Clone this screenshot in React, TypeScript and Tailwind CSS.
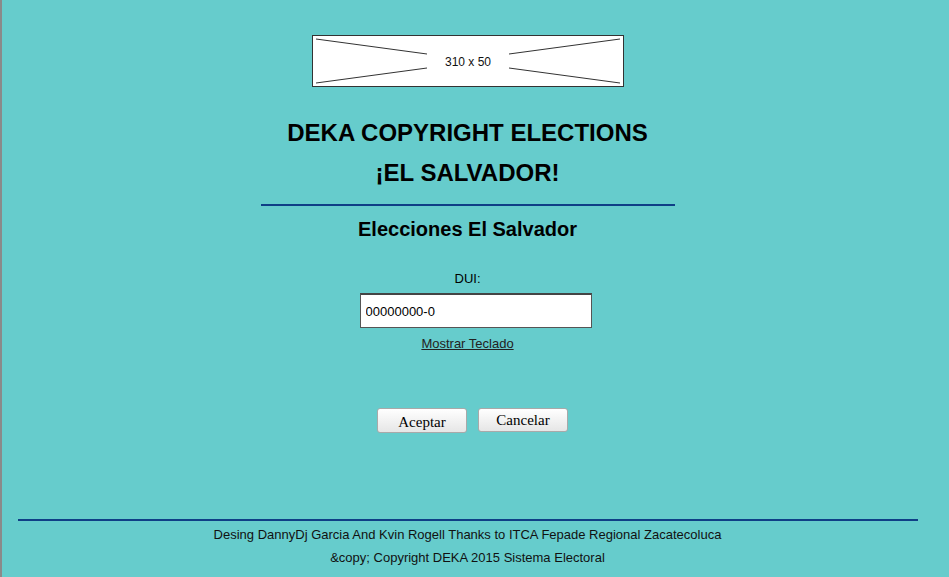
export default function App() {
  return (
    <div className="min-h-[577px] bg-[#66cccc] font-['Liberation_Sans',Arial,sans-serif] text-black">
      <div className="w-[933px] min-h-[577px] border-l-2 border-[#8a8a8a] flex flex-col items-center">
        {/* banner placeholder */}
        <div className="mt-[35px] w-[312px] h-[52px] bg-white border border-[#333]">
          <svg width="310" height="50" viewBox="0 0 310 50">
            <line x1="3" y1="3" x2="114" y2="18" stroke="#333" strokeWidth="1" />
            <line x1="3" y1="47" x2="114" y2="32" stroke="#333" strokeWidth="1" />
            <line x1="307" y1="3" x2="196" y2="18" stroke="#333" strokeWidth="1" />
            <line x1="307" y1="47" x2="196" y2="32" stroke="#333" strokeWidth="1" />
            <text x="155" y="30" textAnchor="middle" fontSize="12" fontFamily="'Liberation Sans', Arial, sans-serif" fill="#111">
              310 x 50
            </text>
          </svg>
        </div>

        <h1 className="mt-[32px] text-[24px] leading-[28px] font-bold">DEKA COPYRIGHT ELECTIONS</h1>
        <h1 className="mt-[12px] text-[24px] leading-[28px] font-bold">¡EL SALVADOR!</h1>

        <div className="mt-[17px] w-[414px] h-[2px] bg-[#0f3f86]" />

        <h2 className="mt-[11px] text-[20px] leading-[24px] font-bold">Elecciones El Salvador</h2>

        <div className="mt-[30px] text-[13px] leading-[16px]">DUI:</div>
        <input
          type="text"
          defaultValue="00000000-0"
          className="mt-[6px] ml-[16px] w-[232px] h-[35px] px-[5px] bg-white border border-[#555] border-t-2 border-t-[#444] text-[13px] text-black outline-none"
        />
        <a href="#" className="mt-[8px] text-[13px] leading-[16px] text-[#222] underline">
          Mostrar Teclado
        </a>

        <div className="mt-[56px] ml-[10px] flex gap-[11px] font-['Liberation_Serif','Times_New_Roman',serif] text-[15px]">
          <button className="w-[90px] h-[25px] pt-[2px] rounded-[3px] border border-[#a9a9a9] bg-gradient-to-b from-white to-[#e6e6e6] leading-[20px]">
            Aceptar
          </button>
          <button className="w-[90px] h-[24px] rounded-[3px] border border-[#a9a9a9] bg-gradient-to-b from-white to-[#e6e6e6] leading-[20px]">
            Cancelar
          </button>
        </div>

        <div className="mt-[86px] w-[900px] h-[2px] bg-[#0f3f86]" />
        <p className="mt-[6px] text-[13px] leading-[16px] text-[#111]">
          Desing DannyDj Garcia And Kvin Rogell Thanks to ITCA Fepade Regional Zacatecoluca
        </p>
        <p className="mt-[7px] text-[13px] leading-[16px] text-[#111]">
          &amp;copy; Copyright DEKA 2015 Sistema Electoral
        </p>
      </div>
    </div>
  );
}
